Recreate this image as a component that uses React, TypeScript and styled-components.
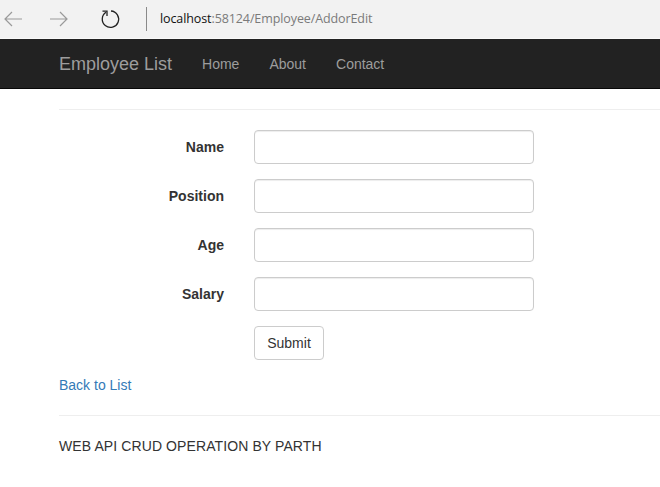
import React from "react";
import styled, { createGlobalStyle } from "styled-components";

const Global = createGlobalStyle`
  html, body { margin: 0; padding: 0; background: #fff; }
  body { font-family: "Liberation Sans", Arial, sans-serif; font-size: 14px; line-height: 20px; color: #333; overflow: hidden; }
  * { box-sizing: border-box; }
`;

const Chrome = styled.div`
  height: 39px;
  background: #f2f2f2;
  border-bottom: 1px solid #f9f9f9;
  display: flex;
  align-items: center;
`;

const NavIcon = styled.div<{ $w: number }>`
  width: ${(p) => p.$w}px;
  height: 37px;
  display: flex;
  align-items: center;
  justify-content: center;
`;

const Divider = styled.div`
  width: 1px;
  height: 24px;
  background: #8a8a8a;
  margin: 0 13px 0 18px;
`;

const Url = styled.div`
  font-family: "Open Sans", "Noto Sans", sans-serif;
  font-size: 12.5px;
  color: #7a7a7a;
  letter-spacing: -0.1px;
  span { color: #111; }
`;

const Navbar = styled.nav`
  height: 50px;
  background: #222;
  border-bottom: 1px solid #080808;
  display: flex;
  align-items: center;
  padding-left: 59px;
`;

const Brand = styled.a`
  font-size: 18px;
  color: #9d9d9d;
  text-decoration: none;
  margin-right: 15px;
  padding-top: 1px;
`;

const NavLink = styled.a`
  font-size: 14px;
  color: #9d9d9d;
  text-decoration: none;
  padding: 0 15px;
`;

const Main = styled.div`
  padding-left: 59px;
`;

const Rule = styled.hr`
  border: 0;
  border-top: 1px solid #eee;
  margin: 20px 0;
  height: 0;
`;

const Form = styled.form`
  display: grid;
  grid-template-columns: 165px 280px;
  column-gap: 30px;
  row-gap: 15px;
`;

const Label = styled.label`
  font-weight: bold;
  text-align: right;
  padding-top: 7px;
  color: #333;
`;

const Input = styled.input`
  height: 34px;
  width: 280px;
  border: 1px solid #ccc;
  border-radius: 4px;
  box-shadow: inset 0 1px 1px rgba(0, 0, 0, 0.075);
  padding: 6px 12px;
  font-size: 14px;
`;

const Button = styled.button`
  grid-column: 2;
  justify-self: start;
  height: 34px;
  width: 70px;
  background: #fff;
  border: 1px solid #ccc;
  border-radius: 4px;
  font-family: "Liberation Sans", Arial, sans-serif;
  font-size: 14px;
  color: #333;
  padding: 0;
`;

const BackLink = styled.a`
  display: block;
  margin-top: 15px;
  color: #337ab7;
  text-decoration: none;
`;

const Footer = styled.p`
  margin: 0;
  color: #333;
  letter-spacing: 0.1px;
`;

const fields = ["Name", "Position", "Age", "Salary"];

export default function App() {
  return (
    <>
      <Global />
      <Chrome>
        <NavIcon $w={26}>
          <svg width="22" height="16" viewBox="0 0 22 16">
            <path d="M20 8H3M10 1L3 8l7 7" fill="none" stroke="#9a9a9a" strokeWidth="1.2" />
          </svg>
        </NavIcon>
        <NavIcon $w={66}>
          <svg width="22" height="16" viewBox="0 0 22 16">
            <path d="M2 8h17M12 1l7 7-7 7" fill="none" stroke="#9a9a9a" strokeWidth="1.2" />
          </svg>
        </NavIcon>
        <NavIcon $w={36}>
          <svg width="22" height="22" viewBox="0 0 22 22">
            <path d="M7 4.3A8.2 8.2 0 1 0 12 3" fill="none" stroke="#222" strokeWidth="1.3" />
            <path d="M3.5 3.2H8V8" fill="none" stroke="#222" strokeWidth="1.3" />
          </svg>
        </NavIcon>
        <Divider />
        <Url>
          <span>localhost</span>:58124/Employee/AddorEdit
        </Url>
      </Chrome>
      <Navbar>
        <Brand href="#">Employee List</Brand>
        <NavLink href="#">Home</NavLink>
        <NavLink href="#">About</NavLink>
        <NavLink href="#">Contact</NavLink>
      </Navbar>
      <Main>
        <Rule />
        <Form onSubmit={(e) => e.preventDefault()}>
          {fields.map((f) => (
            <React.Fragment key={f}>
              <Label>{f}</Label>
              <Input type="text" />
            </React.Fragment>
          ))}
          <Button type="submit">Submit</Button>
        </Form>
        <BackLink href="#">Back to List</BackLink>
        <Rule />
        <Footer>WEB API CRUD OPERATION BY PARTH</Footer>
      </Main>
    </>
  );
}
